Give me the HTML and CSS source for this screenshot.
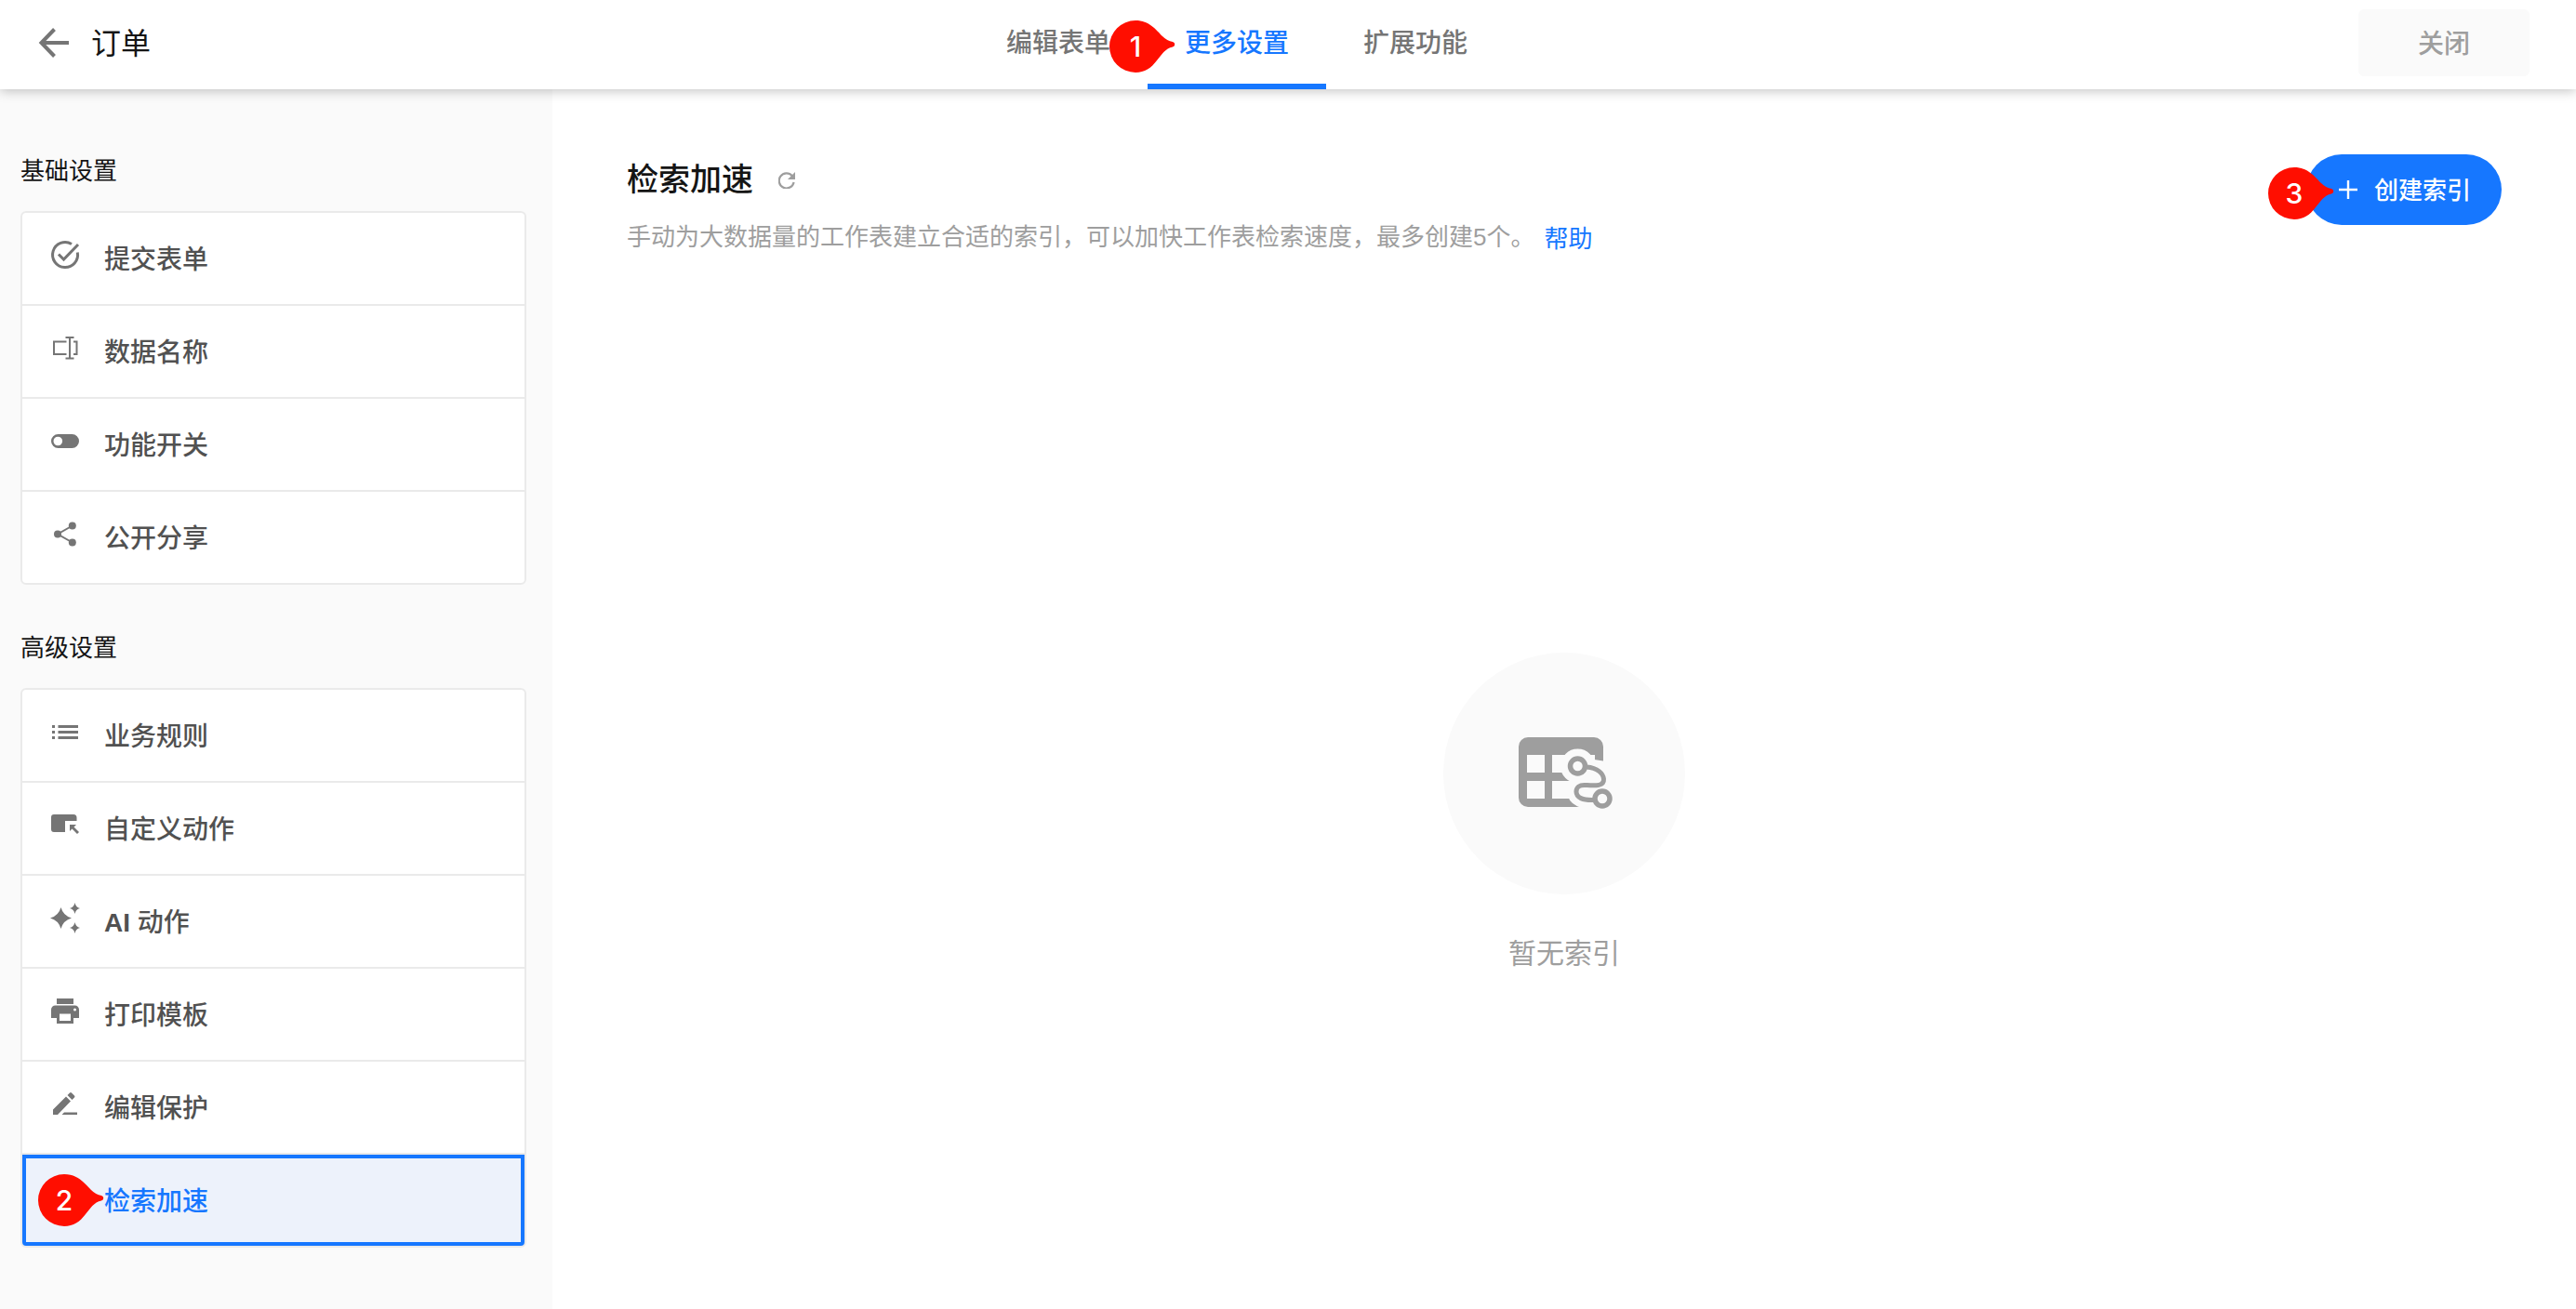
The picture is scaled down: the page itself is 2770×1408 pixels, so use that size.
FILE: index.html
```html
<!DOCTYPE html>
<html lang="zh-CN">
<head>
  <meta charset="UTF-8" />
  <title>订单</title>
  <link rel="stylesheet" href="styles.css">
</head>
<body>
  <header class="header">
    <div class="header-left">
      <svg class="back" viewBox="0 0 36 36"><path d="M34 18H4M18.500 3.500L4.500 18l14 14.500" fill="none" stroke="currentColor" stroke-width="4"/></svg>
      <span class="header-title">订单</span>
    </div>
    <nav class="tabs">
      <a class="tab">编辑表单</a>
      <a class="tab active">更多设置
        <span class="marker marker-tab"><svg viewBox="0 0 71 56"><path d="M28 0C43 0 50 10 57 17Q62 22 68 23A2.800 2.800 0 0 1 68 28.500C60 30 56 37 51 43C45 51 38 56 28 56A28 28 0 0 1 28 0Z"/></svg><b>1</b></span>
      </a>
      <a class="tab">扩展功能</a>
    </nav>
    <button class="close">关闭</button>
  </header>

  <div class="content">
    <aside class="sidebar">
      <h2 class="group-title">基础设置</h2>
      <ul class="menu">
        <li class="item">
          <svg class="icon" viewBox="0 0 36 36"><path d="M25 6.500A13.500 13.500 0 1 0 31.300 15.500M11 17.500l5.500 5.500L32 7" fill="none" stroke="currentColor" stroke-width="3"/></svg>
          <span>提交表单</span>
        </li>
        <li class="item">
          <svg class="icon" viewBox="0 0 36 36"><path d="M19.500 11.500H6v13.500h13.500M27 11.500h3.500V25H27M23 7v22.500M18.500 7h9M18.500 29.500h9" fill="none" stroke="currentColor" stroke-width="2"/></svg>
          <span>数据名称</span>
        </li>
        <li class="item">
          <svg class="icon" viewBox="0 0 36 36"><path fill-rule="evenodd" d="M10.500 11h15a7.500 7.500 0 0 1 0 15h-15a7.500 7.500 0 0 1 0-15zM10.300 13.700a4.800 4.800 0 1 0 0 9.600 4.800 4.800 0 0 0 0-9.600z"/></svg>
          <span>功能开关</span>
        </li>
        <li class="item">
          <svg class="icon" viewBox="0 0 36 36"><circle cx="10" cy="18.500" r="4"/><circle cx="25.800" cy="9.500" r="4"/><circle cx="25.800" cy="27.500" r="4"/><path d="M25.800 9.500L10 18.500l15.800 9" fill="none" stroke="currentColor" stroke-width="2"/></svg>
          <span>公开分享</span>
        </li>
      </ul>

      <h2 class="group-title">高级设置</h2>
      <ul class="menu">
        <li class="item">
          <svg class="icon" viewBox="0 0 36 36"><path d="M4 11h3v3H4zM4 17h3v3H4zM4 23h3v3H4zM10.500 11H32v3H10.500zM10.500 17H32v3H10.500zM10.500 23H32v3H10.500z"/></svg>
          <span>业务规则</span>
        </li>
        <li class="item">
          <svg class="icon" viewBox="0 0 36 36"><path d="M6 7h21a3.500 3.500 0 0 1 3.500 3.500V14H18v12H6a3 3 0 0 1-3-3V10a3 3 0 0 1 3-3zM23 18h7l-2.500 2.500L33 26l-2 2-5.500-5.500L23 25z"/></svg>
          <span>自定义动作</span>
        </li>
        <li class="item">
          <svg class="icon" viewBox="0 0 36 36"><path d="M13.500 7Q16 16 25 18.500Q16 21 13.500 30Q11 21 2 18.500Q11 16 13.500 7zM28.500 2Q29.500 7 34 8Q29.500 9 28.500 14Q27.500 9 23 8Q27.500 7 28.500 2zM28.500 23Q29.500 28 34 29Q29.500 30 28.500 35Q27.500 30 23 29Q27.500 28 28.500 23z"/></svg>
          <span><b>AI</b> 动作</span>
        </li>
        <li class="item">
          <svg class="icon" viewBox="0 0 36 36"><path fill-rule="evenodd" d="M9 5h18v6H9zM7.500 12.500h21A4.500 4.500 0 0 1 33 17v9h-6v6H9v-6H3v-9a4.500 4.500 0 0 1 4.500-4.500zM12 21.500V29h12v-7.500zM28.500 15.500a1.500 1.500 0 1 0 0 3 1.500 1.500 0 0 0 0-3z"/></svg>
          <span>打印模板</span>
        </li>
        <li class="item">
          <svg class="icon" viewBox="0 0 36 36"><path d="M5 30v-5.500L19 10.500l5 5L10 30zM20.500 9L23 6.500q1-1 2 0l3 3q1 1 0 2L25.500 14zM17 27.500h14V30H14.500z"/></svg>
          <span>编辑保护</span>
        </li>
        <li class="item selected">
          <span class="marker marker-item"><svg viewBox="0 0 71 56"><path d="M28 0C43 0 50 10 57 17Q62 22 68 23A2.800 2.800 0 0 1 68 28.500C60 30 56 37 51 43C45 51 38 56 28 56A28 28 0 0 1 28 0Z"/></svg><b>2</b></span>
          <svg class="icon" viewBox="0 0 36 36"></svg>
          <span>检索加速</span>
        </li>
      </ul>
    </aside>

    <main class="main">
      <div class="main-head">
        <div>
          <h1 class="page-title">检索加速
            <svg class="refresh" viewBox="0 0 18 18"><path d="M14.800 4.200A8 8 0 1 0 16.600 11" fill="none" stroke="currentColor" stroke-width="2.200"/><path d="M18 0v8h-8z"/></svg>
          </h1>
          <p class="desc">手动为大数据量的工作表建立合适的索引，可以加快工作表检索速度，最多创建5个。<a class="help">帮助</a></p>
        </div>
        <button class="create">
          <span class="marker marker-create"><svg viewBox="0 0 71 56"><path d="M28 0C43 0 50 10 57 17Q62 22 68 23A2.800 2.800 0 0 1 68 28.500C60 30 56 37 51 43C45 51 38 56 28 56A28 28 0 0 1 28 0Z"/></svg><b>3</b></span>
          <svg class="plus" viewBox="0 0 20 20"><path d="M10 0v20M0 10h20" stroke="currentColor" stroke-width="2.400"/></svg>
          <span class="create-text">创建索引</span>
        </button>
      </div>

      <div class="empty">
        <div class="empty-circle">
          <svg class="empty-icon" viewBox="0 0 102 78">
            <path fill-rule="evenodd" d="M10 0h71a10 10 0 0 1 10 10v55a10 10 0 0 1-10 10H10A10 10 0 0 1 0 65V10A10 10 0 0 1 10 0zM9 19v19h19V19zM36 19v19h46V19zM9 47v19h19V47zM36 47v19h46V47z"/>
            <g class="halo">
              <path d="M72 32C84 33 91 39 91 46C91 53 82 52 72 51.500C65 51 62 54 62 58.500C62 65 69 68 81 67.500L96 67V36z"/>
              <circle cx="63.500" cy="31" r="9"/>
              <circle cx="89.500" cy="66" r="8"/>
            </g>
            <path class="route" d="M73 32C85 33 91 39 91.500 45C92 53 82 52 72 51.500C65 51 62 54 62 58.500C62 65 69 68 81 67.500"/>
            <circle class="node" cx="63.500" cy="31" r="8"/>
            <circle class="node" cx="90" cy="66" r="8"/>
          </svg>
        </div>
        <p class="empty-text">暂无索引</p>
      </div>
    </main>
  </div>
</body>
</html>
```
FILE: styles.css
```css
* {
  box-sizing: border-box;
}

body {
  margin: 0;
  height: 1408px;
  overflow: hidden;
  background-color: #fff;
  color: #151515;
  font-family: "Liberation Sans", "Noto Sans CJK SC", sans-serif;
  display: flex;
  flex-direction: column;
}

h1, h2, p, ul {
  margin: 0;
  padding: 0;
}

button {
  border: none;
  font-family: inherit;
  padding: 0;
}

svg {
  display: block;
  fill: currentColor;
}

.header {
  position: relative;
  z-index: 1;
  flex: none;
  display: flex;
  height: 96px;
  background-color: #fff;
  box-shadow: 0 2px 12px rgba(0, 0, 0, 0.24);
}

.header-left {
  display: flex;
  align-items: center;
  width: 1042px;
  height: 92px;
  padding-left: 40px;
}

.back {
  width: 36px;
  height: 36px;
  color: #757575;
}

.header-title {
  margin-left: 22px;
  padding-bottom: 4px;
  font-size: 32px;
}

.tabs {
  display: flex;
}

.tab {
  position: relative;
  width: 192px;
  height: 96px;
  line-height: 94px;
  text-align: center;
  font-size: 28px;
  font-weight: 500;
  color: #757575;
}

.tab.active {
  color: #1677ff;
  border-bottom: 6px solid #1677ff;
}

.close {
  width: 184px;
  height: 72px;
  margin: 10px 50px 0 auto;
  padding-bottom: 3px;
  border-radius: 6px;
  background-color: #fafafa;
  color: #9e9e9e;
  font-size: 28px;
  font-weight: 500;
}

/* numbered red pins */
.marker {
  position: absolute;
  width: 71px;
  height: 56px;
  color: #ff0e00;
}

.marker b {
  position: absolute;
  left: 0;
  top: 0;
  width: 56px;
  line-height: 56px;
  text-align: center;
  font-family: Inter, sans-serif;
  font-size: 30px;
  font-weight: 500;
  color: #fff;
}

.marker-tab {
  left: -41px;
  top: 22px;
}

.marker-item {
  left: 13px;
  top: 17px;
}

.marker-create {
  left: -41px;
  top: 14px;
}

.content {
  flex: 1;
  display: flex;
}

.sidebar {
  width: 594px;
  padding: 68px 28px 0 22px;
  background-color: #fafafa;
}

.group-title {
  height: 40px;
  line-height: 41px;
  margin-bottom: 23px;
  font-size: 26px;
  font-weight: 400;
}

.menu {
  margin-bottom: 48px;
  list-style: none;
  border: 2px solid #eaeaea;
  border-radius: 6px;
  background-color: #fff;
}

.item {
  display: flex;
  align-items: center;
  gap: 24px;
  height: 100px;
  padding-left: 28px;
  border-bottom: 2px solid #eaeaea;
  font-size: 28px;
  font-weight: 500;
  color: #515151;
}

.item > span:last-child {
  padding-bottom: 3px;
}

.item:last-child {
  height: 98px;
  border-bottom: none;
}

.icon {
  width: 36px;
  height: 36px;
  margin-bottom: 8px;
  color: #757575;
}

.item.selected {
  position: relative;
  padding-left: 24px;
  border: 4px solid #1677ff;
  border-radius: 0 0 4px 4px;
  background-color: #edf2fb;
  color: #1677ff;
}

.main {
  flex: 1;
  padding: 70px 80px 0;
}

.main-head {
  display: flex;
  justify-content: space-between;
  height: 152px;
}

.page-title {
  display: flex;
  align-items: center;
  height: 48px;
  font-size: 34px;
  font-weight: 500;
}

.refresh {
  width: 18px;
  height: 18px;
  margin: 8px 0 0 27px;
  color: #9e9e9e;
}

.desc {
  display: flex;
  margin-top: 21px;
  line-height: 40px;
  font-size: 26px;
  color: #9e9e9e;
}

.help {
  margin: 2px 0 0 10px;
  color: #1677ff;
}

.create {
  position: relative;
  display: flex;
  align-items: center;
  gap: 18px;
  width: 210px;
  height: 76px;
  padding-left: 35px;
  border-radius: 38px;
  background-color: #1677ff;
  color: #fff;
  font-size: 26px;
  font-weight: 500;
}

.create-text {
  padding-bottom: 4px;
}

.plus {
  width: 20px;
  height: 20px;
}

.empty {
  display: flex;
  flex-direction: column;
  align-items: center;
  padding-top: 384px;
}

.empty-circle {
  width: 260px;
  height: 260px;
  padding: 91px 0 0 81px;
  border-radius: 50%;
  background-color: #fafafa;
  color: #9e9e9e;
}

.empty-icon {
  width: 102px;
  height: 78px;
}

.halo {
  fill: #fafafa;
  stroke: #fafafa;
  stroke-width: 19;
}

.route {
  fill: none;
  stroke: #9e9e9e;
  stroke-width: 5;
}

.node {
  fill: #fafafa;
  stroke: #9e9e9e;
  stroke-width: 5.500;
}

.empty-text {
  margin-top: 42px;
  line-height: 44px;
  font-size: 30px;
  color: #9e9e9e;
}
```
